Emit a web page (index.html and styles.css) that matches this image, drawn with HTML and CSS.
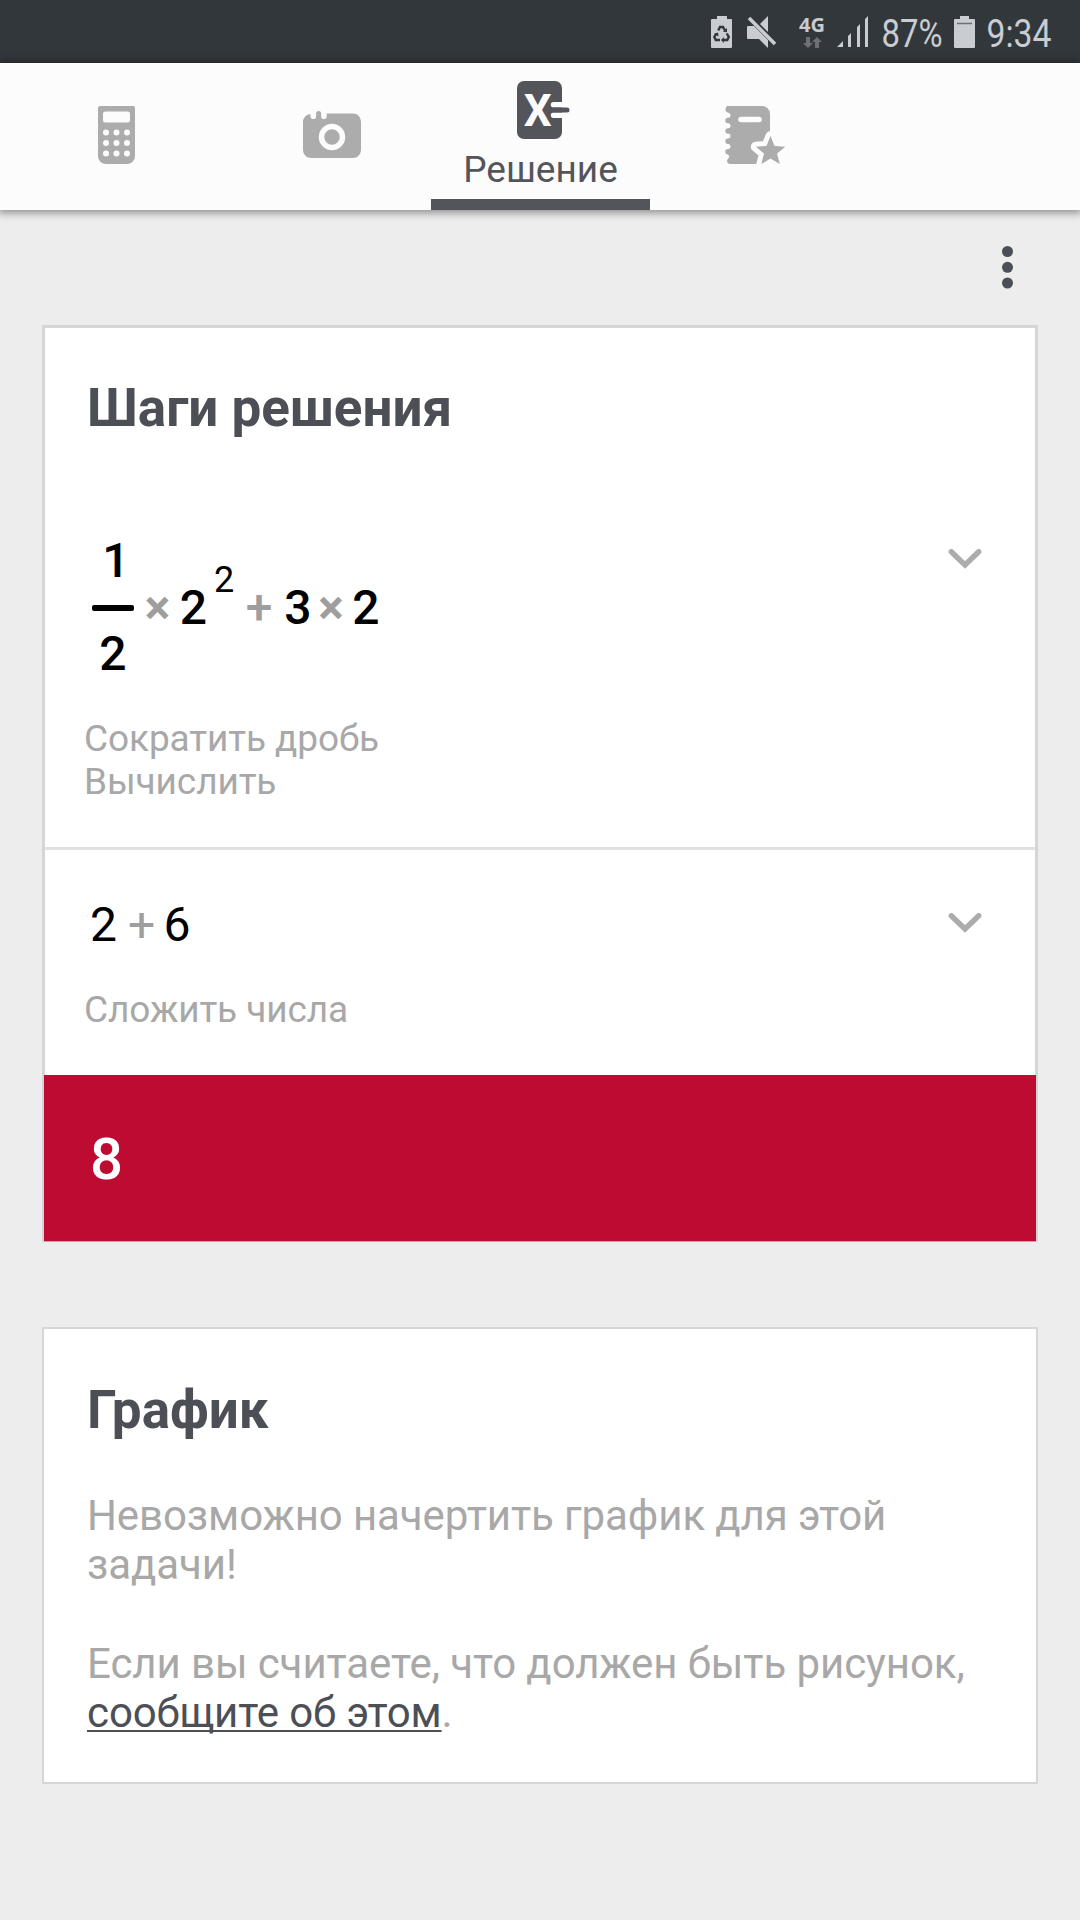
FILE: index.html
```html
<!DOCTYPE html>
<html lang="ru">
<head>
    <meta charset="UTF-8">
    <meta name="viewport" content="width=device-width, initial-scale=1.0">
    <title>Решение</title>
    <link rel="stylesheet" href="styles.css">
</head>
<body>
    <!-- Status bar -->
    <div class="status-bar">
        <svg class="st-saver" width="21" height="32" viewBox="0 0 21 32">
            <path fill="#c9ccd1" d="M6 0h10v3h4a1 1 0 0 1 1 1v27a1 1 0 0 1-1 1H1a1 1 0 0 1-1-1V4a1 1 0 0 1 1-1h5z"/>
            <g fill="none" stroke="#32373b" stroke-width="2.4">
                <path d="M7.2 14.5L9 11h3l2 3.5"/>
                <path d="M15.8 17.5l2 3.5-1.6 3H12"/>
                <path d="M9 24H4.8l-1.5-3 2-3.5"/>
            </g>
            <path fill="#32373b" d="M12 15.8l4 .4V12zM12.8 21v6L10 24zM3 18l4-1.6.6 4z"/>
        </svg>
        <svg class="st-mute" width="30" height="32" viewBox="0 0 30 32">
            <path fill="#c9ccd1" d="M0 11a1 1 0 0 1 1-1h6l14 14v8l-9-9H1a1 1 0 0 1-1-1zM21 0v16l-8-8z"/>
            <path stroke="#c9ccd1" stroke-width="3.6" d="M2 2l26 26"/>
        </svg>
        <div class="network">
            <span>4G</span>
            <svg width="19" height="11" viewBox="0 0 19 11">
                <path fill="#6d7175" d="M3 0h4v6h3l-5 5-5-5h3zM12 11h4V5h3l-5-5-5 5h3z"/>
            </svg>
        </div>
        <svg class="st-signal" width="32" height="32" viewBox="0 0 32 32">
            <path fill="#c9ccd1" d="M0 31l6-6v6zM11 20l3-3v14h-3zM20 11l3-3v23h-3zM28 3l3-3v31h-3z"/>
        </svg>
        <svg class="st-text st-percent" width="62" height="52" viewBox="0 0 62 52">
            <text x="0.500" y="41" textLength="61" lengthAdjust="spacingAndGlyphs">87%</text>
        </svg>
        <svg class="st-battery" width="21" height="32" viewBox="0 0 21 32">
            <path fill="#c9ccd1" d="M6 0h9v3h5a1 1 0 0 1 1 1v27a1 1 0 0 1-1 1H1a1 1 0 0 1-1-1V4a1 1 0 0 1 1-1h5z"/>
            <path stroke="#6d7175" stroke-width="1.5" d="M3 7.500h15"/>
        </svg>
        <svg class="st-text" width="66" height="52" viewBox="0 0 66 52">
            <text x="0.500" y="41" textLength="65" lengthAdjust="spacingAndGlyphs">9:34</text>
        </svg>
    </div>

    <!-- Tabs -->
    <nav class="tabs">
        <div class="tab">
            <svg width="37" height="58" viewBox="0 0 37 58">
                <path fill="#acacac" d="M2 0h33a2 2 0 0 1 2 2v48a8 8 0 0 1-8 8H8a8 8 0 0 1-8-8V2a2 2 0 0 1 2-2z"/>
                <rect fill="#fcfcfc" x="5" y="5.500" width="27" height="11" rx="2.500"/>
                <g fill="#fcfcfc">
                    <circle cx="8" cy="26.500" r="3"/><circle cx="18.500" cy="26.500" r="3"/><circle cx="29" cy="26.500" r="3"/>
                    <circle cx="8" cy="37" r="3"/><circle cx="18.500" cy="37" r="3"/><circle cx="29" cy="37" r="3"/>
                    <circle cx="8" cy="47.500" r="3"/><circle cx="18.500" cy="47.500" r="3"/><circle cx="29" cy="47.500" r="3"/>
                </g>
            </svg>
        </div>
        <div class="tab">
            <svg width="58" height="48" viewBox="0 0 58 48">
                <path fill="#acacac" d="M7.500 3V5.300a2.800 2.800 0 0 0 5.600 0V2.500a2.500 2.500 0 0 1 5 0V5.300a2.800 2.800 0 0 0 5.600 0V2.500H50a8 8 0 0 1 8 8V39a8 8 0 0 1-8 8H8a8 8 0 0 1-8-8V10.500A8 8 0 0 1 7.500 3z"/>
                <circle cx="29" cy="26" r="10.500" fill="none" stroke="#fcfcfc" stroke-width="5.500"/>
            </svg>
        </div>
        <div class="tab active">
            <svg width="53" height="58" viewBox="0 0 53 58">
                <rect fill="#54545b" width="45" height="58" rx="7"/>
                <path fill="#fcfcfc" d="M46 21h-9.500a2.700 2.700 0 0 0 0 5.400H46zM46 31.600h-9.500a2.700 2.700 0 0 0 0 5.400H46z"/>
                <path stroke="#54545b" stroke-width="5" stroke-linecap="round" d="M36 29h14"/>
                <text class="x-mark" x="20.700" y="44.700" text-anchor="middle">X</text>
            </svg>
            <span>Решение</span>
        </div>
        <div class="tab">
            <svg width="61" height="58" viewBox="0 0 61 58">
                <path fill="#acacac" d="M5 0H37a8 8 0 0 1 8 8V58H5a3 3 0 0 1-2-5.200 2.700 2.700 0 0 0 0-4.400 2.400 2.400 0 0 1 0-5.400 2.500 2.500 0 0 0 0-5 2.400 2.400 0 0 1 0-5.400 2.500 2.500 0 0 0 0-5 2.400 2.400 0 0 1 0-5.400 2.500 2.500 0 0 0 0-5 2.400 2.400 0 0 1 0-5.400 2.500 2.500 0 0 0 0-5A3.500 3.500 0 0 1 5 0z"/>
                <path stroke="#fcfcfc" stroke-width="5.500" stroke-linecap="round" d="M16 13.500h18"/>
                <path fill="#acacac" stroke="#fcfcfc" stroke-width="10" stroke-linejoin="round" paint-order="stroke" d="M45.500 30l4.100 9.900 10.700.8-8.200 6.900 2.600 10.400-9.200-5.600-9.100 5.600 2.600-10.400-8.200-6.900 10.700-.8z"/>
            </svg>
        </div>
    </nav>

    <div class="toolbar">
        <svg width="12" height="43" viewBox="0 0 12 43" fill="#4d4f56">
            <circle cx="6.500" cy="5.500" r="5.500"/><circle cx="6.500" cy="21.300" r="5.500"/><circle cx="6.500" cy="37" r="5.500"/>
        </svg>
    </div>

    <!-- Solution steps -->
    <section class="card steps">
        <h2>Шаги решения</h2>

        <div class="step step-first">
            <div class="expr expr-long">
                <span class="fraction"><span class="numerator">1</span><i></i><span>2</span></span>
                <span class="op times">×</span>
                <span>2</span>
                <sup>2</sup>
                <span class="op">+</span>
                <span>3</span>
                <span class="op times">×</span>
                <span>2</span>
            </div>
            <svg class="chevron" width="34" height="20" viewBox="0 0 34 20">
                <path d="M3.300 2.800L17 16L30.700 2.800"/>
            </svg>
            <p class="hint">Сократить дробь<br>Вычислить</p>
        </div>

        <div class="step step-second">
            <div class="expr expr-short">
                <span>2</span>
                <span class="op">+</span>
                <span>6</span>
            </div>
            <svg class="chevron" width="34" height="20" viewBox="0 0 34 20">
                <path d="M3.300 2.800L17 16L30.700 2.800"/>
            </svg>
            <p class="hint">Сложить числа</p>
        </div>

        <div class="answer">8</div>
    </section>

    <!-- Graph -->
    <section class="card graph">
        <h2>График</h2>
        <p>Невозможно начертить график для этой задачи!</p>
        <p>Если вы считаете, что должен быть рисунок, <a href="#">сообщите об этом</a>.</p>
    </section>
</body>
</html>
```
FILE: styles.css
```css
* {
    margin: 0;
    padding: 0;
    box-sizing: border-box;
}

body {
    background-color: #ededed;
    color: #4d4f56;
    font-family: Roboto, "Liberation Sans", sans-serif;
    min-height: 1920px;
}

svg {
    display: block;
    flex: none;
}

/* status bar */
.status-bar {
    height: 63px;
    padding: 16px 28px 0 0;
    background-color: #32373b;
    color: #c9ccd1;
    display: flex;
    justify-content: flex-end;
    align-items: flex-start;
}

.st-text {
    margin-top: -10px;
    overflow: visible;
}

.st-text text {
    fill: #c9ccd1;
    font-size: 39.5px;
}

.st-saver {
    margin-right: 15px;
}

.st-mute {
    margin-right: 22px;
}

.network {
    width: 26px;
    margin-right: 12px;
    display: flex;
    flex-direction: column;
    align-items: center;
    gap: 3px;
}

.network span {
    font-family: "Open Sans", sans-serif;
    font-size: 20px;
    font-weight: 700;
    line-height: 18px;
}

.st-signal {
    margin-right: 12px;
}

.st-percent {
    margin-right: 11px;
}

.st-battery {
    margin-right: 11px;
}

/* tabs */
.tabs {
    height: 147px;
    background-color: #fcfcfc;
    box-shadow: 0 1px 8px 2px rgba(0, 0, 0, 0.4);
    display: grid;
    grid-template-columns: 233px 198px 219px 210px;
}

.tab {
    display: flex;
    flex-direction: column;
    align-items: center;
    padding-top: 43px;
}

.tab:nth-child(2) {
    padding-top: 48px;
}

.tab:nth-child(4) {
    padding-left: 1px;
}

.tab.active {
    padding-top: 18px;
    border-bottom: 11px solid #54545b;
    color: #54545b;
}

.tab.active svg {
    margin: 0 0 9px 5px;
}

.x-mark {
    fill: #fcfcfc;
    font-size: 44px;
    font-weight: 700;
}

.tab span {
    font-size: 37px;
    line-height: 43px;
}

.toolbar {
    height: 115px;
    padding: 36px 67px 0 0;
    display: flex;
    justify-content: flex-end;
}

/* cards */
.card {
    width: 996px;
    margin: 0 auto;
    background-color: #fff;
    border: 3px solid #d6d6d6;
}

.card h2 {
    font-size: 53px;
    line-height: 62px;
    font-weight: 700;
}

.steps {
    border-bottom: 0;
}

.steps h2 {
    padding: 49px 0 0 42px;
}

.step {
    display: grid;
    grid-template-columns: 1fr 34px;
    padding-right: 53px;
}

.step-first {
    height: 411px;
    grid-template-rows: 278px auto;
    border-bottom: 3px solid #e1e1e1;
}

.step-second {
    height: 225px;
    grid-template-rows: 138px auto;
}

.expr {
    display: grid;
    justify-items: center;
    align-items: start;
    align-content: start;
    padding-left: 47px;
    color: #000;
    font-size: 48px;
    line-height: 56px;
}

.expr .op {
    color: #9e9e9e;
}

.expr-long {
    grid-template-columns: 42px 47px 25px 36px 34px 44px 22px 48px;
    padding-top: 94px;
    font-weight: 500;
}

.expr-long .times {
    font-weight: 700;
}

.expr-long > span,
.expr-long > sup {
    margin-top: 47px;
}

.expr-long > .fraction {
    width: 42px;
    margin-top: 0;
    display: flex;
    flex-direction: column;
    align-items: center;
}

.numerator {
    padding-left: 6px;
}

.fraction i {
    width: 42px;
    height: 6px;
    margin: 16px 0 15px;
    border-radius: 2px;
    background-color: #000;
}

.expr-long > sup {
    margin-top: 26px;
    font-size: 36px;
    font-weight: 400;
    line-height: 42px;
}

.expr-short {
    grid-template-columns: 23px 53px 18px;
    padding-top: 47px;
}

.chevron {
    margin-top: 110px;
}

.step-second .chevron {
    margin-top: 63px;
}

.chevron path {
    fill: none;
    stroke: #acacac;
    stroke-width: 5.5;
    stroke-linecap: round;
}

.hint {
    grid-column: 1 / 3;
    padding-left: 39px;
    color: #a8a8a8;
    font-size: 37px;
    line-height: 43px;
    letter-spacing: -0.1px;
}

.answer {
    height: 167px;
    margin: 0 -1px;
    padding: 50px 0 0 46px;
    background-color: #bd0b32;
    border-bottom: 1px solid #dc9aa8;
    color: #fff;
    font-size: 58px;
    line-height: 68px;
    font-weight: 500;
}

.graph {
    margin-top: 85px;
    height: 457px;
    padding: 50px 40px 0 43px;
    border-width: 2px;
}

.graph h2 {
    margin-bottom: 50px;
}

.graph p {
    color: #a8a8a8;
    font-size: 42px;
    line-height: 49.25px;
    letter-spacing: -0.09px;
    margin-bottom: 49px;
}

.graph a {
    color: #4d4f56;
    text-decoration: underline;
    text-decoration-thickness: 2px;
    text-underline-offset: 3px;
    text-decoration-skip-ink: none;
}
```
